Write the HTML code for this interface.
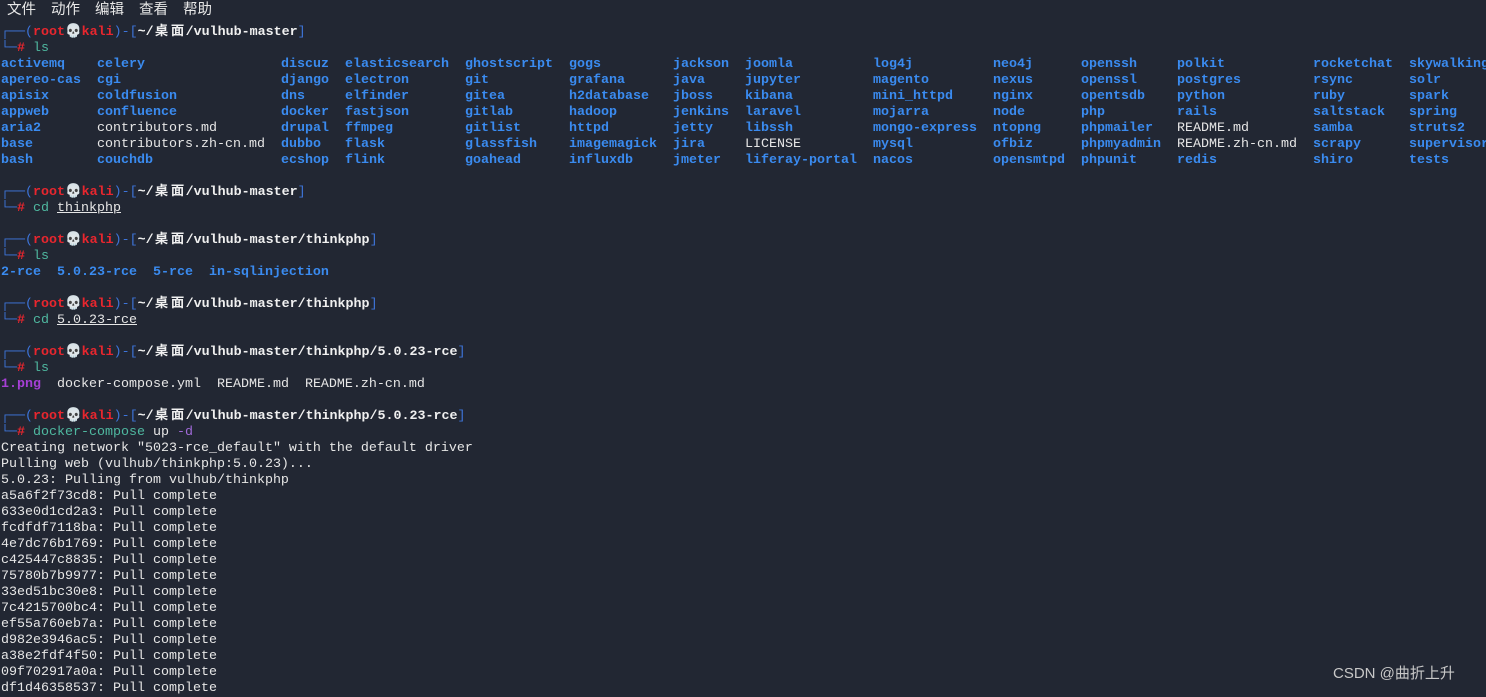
<!DOCTYPE html>
<html><head><meta charset="utf-8"><style>
body{margin:0;width:1486px;height:691px;background:#222733;overflow:hidden;position:relative;font-family:"Liberation Mono","Noto Sans CJK SC",monospace;font-size:13.33px;color:#e6e6e6}
.menu{position:absolute;top:-2px;left:7px;font-family:"Liberation Sans","Noto Sans CJK SC",sans-serif;font-size:14.5px;color:#e8e8e8;word-spacing:0}
.menu span{margin-right:15px}
.t{position:absolute;top:25px;left:1px}
.l{height:16px;line-height:16px;white-space:pre}
.g{display:grid;grid-template-columns:96px 184px 64px 120px 104px 104px 72px 128px 120px 88px 96px 136px 96px 90px;height:16px;line-height:16px;white-space:pre}
.b{color:#3a8bf0;font-weight:bold}
.w{color:#e6e6e6;font-weight:normal}
.ln{color:#3d74d9}
.r{color:#e8262e;font-weight:bold}
.p{color:#f0f0f0;font-weight:bold}
.c{color:#4fb8a0}
.u{text-decoration:underline}
.cj{display:inline-block;width:16px;text-align:center}
.m{color:#a63fd6;font-weight:bold}
.wm{position:absolute;left:1333px;top:662px;font-family:"Liberation Sans","Noto Sans CJK SC",sans-serif;font-size:15px;color:#c8c8c8}
</style></head><body>
<div class="menu"><span>文件</span><span>动作</span><span>编辑</span><span>查看</span><span>帮助</span></div>
<div class="t">
<div class="l"><span class="ln">┌──(</span><span class="r">root💀kali</span><span class="ln">)-[</span><span class="p">~/<span class="cj">桌</span><span class="cj">面</span>/vulhub-master</span><span class="ln">]</span></div>
<div class="l"><span class="ln">└─</span><span class="r">#</span> <span class="c">ls</span></div>
<div class="g b"><span>activemq</span><span>celery</span><span>discuz</span><span>elasticsearch</span><span>ghostscript</span><span>gogs</span><span>jackson</span><span>joomla</span><span>log4j</span><span>neo4j</span><span>openssh</span><span>polkit</span><span>rocketchat</span><span>skywalking</span></div>
<div class="g b"><span>apereo-cas</span><span>cgi</span><span>django</span><span>electron</span><span>git</span><span>grafana</span><span>java</span><span>jupyter</span><span>magento</span><span>nexus</span><span>openssl</span><span>postgres</span><span>rsync</span><span>solr</span></div>
<div class="g b"><span>apisix</span><span>coldfusion</span><span>dns</span><span>elfinder</span><span>gitea</span><span>h2database</span><span>jboss</span><span>kibana</span><span>mini_httpd</span><span>nginx</span><span>opentsdb</span><span>python</span><span>ruby</span><span>spark</span></div>
<div class="g b"><span>appweb</span><span>confluence</span><span>docker</span><span>fastjson</span><span>gitlab</span><span>hadoop</span><span>jenkins</span><span>laravel</span><span>mojarra</span><span>node</span><span>php</span><span>rails</span><span>saltstack</span><span>spring</span></div>
<div class="g b"><span>aria2</span><span class="w">contributors.md</span><span>drupal</span><span>ffmpeg</span><span>gitlist</span><span>httpd</span><span>jetty</span><span>libssh</span><span>mongo-express</span><span>ntopng</span><span>phpmailer</span><span class="w">README.md</span><span>samba</span><span>struts2</span></div>
<div class="g b"><span>base</span><span class="w">contributors.zh-cn.md</span><span>dubbo</span><span>flask</span><span>glassfish</span><span>imagemagick</span><span>jira</span><span class="w">LICENSE</span><span>mysql</span><span>ofbiz</span><span>phpmyadmin</span><span class="w">README.zh-cn.md</span><span>scrapy</span><span>supervisor</span></div>
<div class="g b"><span>bash</span><span>couchdb</span><span>ecshop</span><span>flink</span><span>goahead</span><span>influxdb</span><span>jmeter</span><span>liferay-portal</span><span>nacos</span><span>opensmtpd</span><span>phpunit</span><span>redis</span><span>shiro</span><span>tests</span></div>
<div class="l"> </div>
<div class="l"><span class="ln">┌──(</span><span class="r">root💀kali</span><span class="ln">)-[</span><span class="p">~/<span class="cj">桌</span><span class="cj">面</span>/vulhub-master</span><span class="ln">]</span></div>
<div class="l"><span class="ln">└─</span><span class="r">#</span> <span class="c">cd</span> <span class="u">thinkphp</span></div>
<div class="l"> </div>
<div class="l"><span class="ln">┌──(</span><span class="r">root💀kali</span><span class="ln">)-[</span><span class="p">~/<span class="cj">桌</span><span class="cj">面</span>/vulhub-master/thinkphp</span><span class="ln">]</span></div>
<div class="l"><span class="ln">└─</span><span class="r">#</span> <span class="c">ls</span></div>
<div class="l b">2-rce  5.0.23-rce  5-rce  in-sqlinjection</div>
<div class="l"> </div>
<div class="l"><span class="ln">┌──(</span><span class="r">root💀kali</span><span class="ln">)-[</span><span class="p">~/<span class="cj">桌</span><span class="cj">面</span>/vulhub-master/thinkphp</span><span class="ln">]</span></div>
<div class="l"><span class="ln">└─</span><span class="r">#</span> <span class="c">cd</span> <span class="u">5.0.23-rce</span></div>
<div class="l"> </div>
<div class="l"><span class="ln">┌──(</span><span class="r">root💀kali</span><span class="ln">)-[</span><span class="p">~/<span class="cj">桌</span><span class="cj">面</span>/vulhub-master/thinkphp/5.0.23-rce</span><span class="ln">]</span></div>
<div class="l"><span class="ln">└─</span><span class="r">#</span> <span class="c">ls</span></div>
<div class="l"><span class="m">1.png</span>  docker-compose.yml  README.md  README.zh-cn.md</div>
<div class="l"> </div>
<div class="l"><span class="ln">┌──(</span><span class="r">root💀kali</span><span class="ln">)-[</span><span class="p">~/<span class="cj">桌</span><span class="cj">面</span>/vulhub-master/thinkphp/5.0.23-rce</span><span class="ln">]</span></div>
<div class="l"><span class="ln">└─</span><span class="r">#</span> <span class="c">docker-compose</span> up <span style="color:#a06ad8">-d</span></div>
<div class="l">Creating network "5023-rce_default" with the default driver</div>
<div class="l">Pulling web (vulhub/thinkphp:5.0.23)...</div>
<div class="l">5.0.23: Pulling from vulhub/thinkphp</div>
<div class="l">a5a6f2f73cd8: Pull complete</div>
<div class="l">633e0d1cd2a3: Pull complete</div>
<div class="l">fcdfdf7118ba: Pull complete</div>
<div class="l">4e7dc76b1769: Pull complete</div>
<div class="l">c425447c8835: Pull complete</div>
<div class="l">75780b7b9977: Pull complete</div>
<div class="l">33ed51bc30e8: Pull complete</div>
<div class="l">7c4215700bc4: Pull complete</div>
<div class="l">ef55a760eb7a: Pull complete</div>
<div class="l">d982e3946ac5: Pull complete</div>
<div class="l">a38e2fdf4f50: Pull complete</div>
<div class="l">09f702917a0a: Pull complete</div>
<div class="l">df1d46358537: Pull complete</div>
</div>
<div class="wm">CSDN @曲折上升</div>
</body></html>
